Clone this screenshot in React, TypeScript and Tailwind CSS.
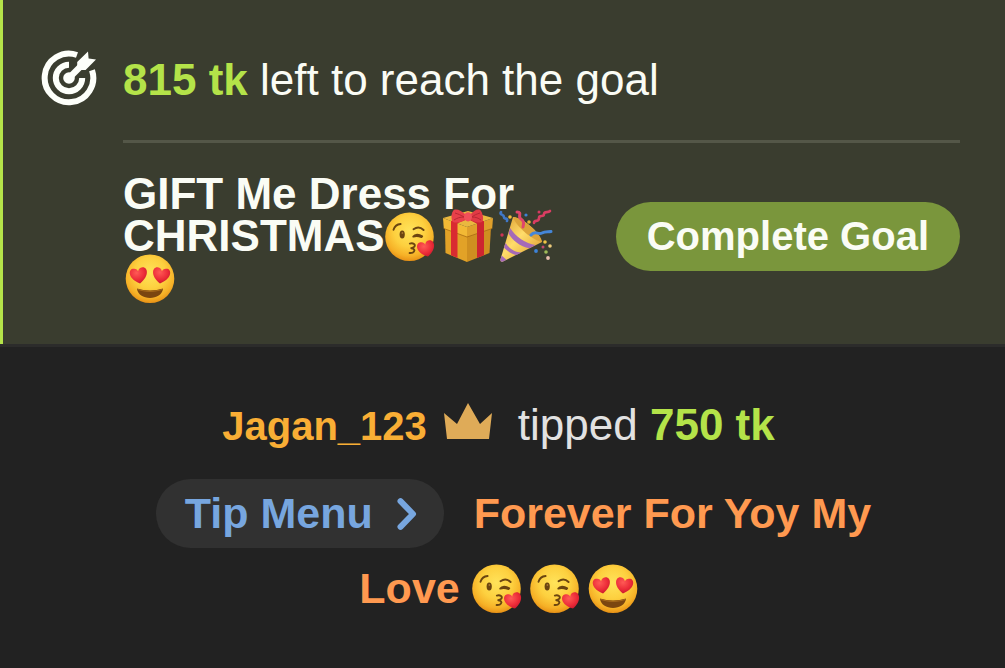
import React from "react";

const HEART =
  "M0 8 C-11 2 -10 -7 -5 -7.5 C-2 -7.8 -.4 -6 0 -4.2 C.4 -6 2 -7.8 5 -7.5 C10 -7 11 2 0 8Z";

const emojiClass = "-mt-[10px] -mb-[11px] inline-block size-[50px] align-baseline";

function Defs() {
  return (
    <svg width="0" height="0" className="absolute" aria-hidden="true">
      <defs>
        <radialGradient id="face" cx=".5" cy=".38" r=".64">
          <stop offset="0" stopColor="#ffe35a" />
          <stop offset=".5" stopColor="#fdd03f" />
          <stop offset=".8" stopColor="#f6b127" />
          <stop offset="1" stopColor="#e58b12" />
        </radialGradient>
        <radialGradient id="heart" cx=".4" cy=".3" r=".75">
          <stop offset="0" stopColor="#ff5a55" />
          <stop offset=".6" stopColor="#ec2c38" />
          <stop offset="1" stopColor="#c5162c" />
        </radialGradient>
        <linearGradient id="cone" x1="0" y1="0" x2="1" y2="1">
          <stop offset="0" stopColor="#d9982c" />
          <stop offset=".45" stopColor="#ffdc6a" />
          <stop offset="1" stopColor="#d69327" />
        </linearGradient>
      </defs>
    </svg>
  );
}

function KissFace({ className = "" }: { className?: string }) {
  return (
    <svg viewBox="0 0 50 50" role="img" aria-label="Face blowing a kiss" className={`${emojiClass} ${className}`}>
      <circle cx="24.5" cy="24.8" r="24.3" fill="url(#face)" />
      <g fill="none" stroke="#6b4510" strokeWidth="1.9" strokeLinecap="round" strokeLinejoin="round">
        <path d="M8.5 17.8C9.6 14.3 12 12.3 15.6 12" />
        <path d="M28.5 17.2C31.8 14.8 35.6 15 38.6 18" />
        <path d="M37.2 24.2C33.6 22 30 22.2 28.3 24.6C31 23.6 33.8 24 36.6 25" />
        <path d="M24.8 31.6C28.3 30.6 31 32.6 29.3 34.7C28.5 35.6 27.3 36 26.2 36.2C28.7 36.4 30.2 37.8 29 39.4C28.1 40.8 26.3 41.2 24.6 41" />
      </g>
      <ellipse cx="17.2" cy="22.6" rx="2.6" ry="4" fill="#6b4510" />
      <circle cx="17.4" cy="21" r=".9" fill="#a8762c" />
      <path d={HEART} fill="url(#heart)" transform="translate(41.2 36.8) rotate(-13)" />
    </svg>
  );
}

function HeartEyes({ className = "" }: { className?: string }) {
  return (
    <svg viewBox="0 0 50 50" role="img" aria-label="Smiling face with heart eyes" className={`${emojiClass} ${className}`}>
      <circle cx="25" cy="24.8" r="24.3" fill="url(#face)" />
      <path d={HEART} fill="url(#heart)" transform="translate(13.8 21.5) rotate(-9)" />
      <path d={HEART} fill="url(#heart)" transform="translate(36.2 21.5) rotate(9)" />
      <path d="M12 34.5C20 37 30 37 38 34.5C37.5 40.5 31.5 44 25 44S12.5 40.5 12 34.5Z" fill="#7b4610" />
      <path d="M13 35.5C21 38 29 38 37 35.5" fill="none" stroke="#a76a1c" strokeWidth="1" />
    </svg>
  );
}

function Gift() {
  return (
    <svg viewBox="0 0 50 54" role="img" aria-label="Wrapped gift" className="-mt-[12px] -mb-[12px] ml-[8px] inline-block h-[54px] w-[50px] align-baseline">
      <path d="M2 18L24 26V53L2.5 44Z" fill="#e2a227" />
      <path d="M24 26L48 18L46.5 44L24 53Z" fill="#cf8f20" />
      <path d="M0 9L24 18V28L.8 19.5Z" fill="#f2b935" />
      <path d="M24 18L50 9L49.2 19.5L24 28Z" fill="#dfa02b" />
      <path d="M0 9L25 2L50 9L24 18Z" fill="#eab83f" />
      <path d="M.8 19.5L24 28L49.2 19.5" fill="none" stroke="#a86c14" strokeWidth=".8" />
      <path d="M8 12L25 6L30 8L14.5 14.3V49L8 46.3Z" fill="#d92b31" />
      <path d="M41 12.2L26 6L21 8L34 14.8V49L41 46.2Z" fill="#cd2530" />
      <path d="M23 6C18 1 12-1 10 2C8 5 8 11 10 13C14 14.5 20 13 23 10Z" fill="#e8404a" />
      <path d="M27 6C31 1 36-1 38 2C40 5 41 11 39 13C35 14.5 30 13 27 10Z" fill="#e13a45" />
      <path d="M12 4C15 5 18 6 21 8C17 8 14 9 11 11" fill="none" stroke="#b82834" strokeWidth="1" />
      <path d="M37 4C34 5 31 6 29 8C33 8 35 9 38 11" fill="none" stroke="#b82834" strokeWidth="1" />
      <ellipse cx="25" cy="7.8" rx="4" ry="4.6" fill="#f0505a" />
    </svg>
  );
}

function Popper() {
  return (
    <svg viewBox="0 0 54 54" role="img" aria-label="Party popper" className="-mt-[12px] -mb-[12px] ml-[6px] inline-block size-[54px] align-baseline">
      <path d="M14 8C24 9 39 22 43 33L4 52.5C2 53.3 1 52 1.6 50Z" fill="url(#cone)" />
      <path d="M11.2 19C16 27 27 35 36.5 36L30.5 39.3C21 37.5 13.5 31.5 9.5 24.5Z" fill="#a56ab8" />
      <path d="M6.6 34C10 39.5 16 43.5 22.5 43.4L17.5 46C12 45 7.5 41.5 5 38.5Z" fill="#a56ab8" />
      <path d="M2.6 46.5L7.5 50.8L4 52.5C2 53.3 1 52 1.6 50Z" fill="#a56ab8" />
      <path d="M14 8C21 7 42 23 43 33C35 32 17 18 14 8Z" fill="#dca33a" />
      <g fill="none" strokeLinecap="round" strokeWidth="3">
        <path d="M18 3C24 3 18 8 22 10C25 12 25 14 24 18" stroke="#e0456b" />
        <path d="M32 26C36 21 39 26 43 24C46 22 49 23 52 22.5" stroke="#4586d8" />
        <path d="M35 14C35 10 40 14 40 9C40 5 45 9 45 5C45 2 49 4 51 2" stroke="#d93d62" strokeWidth="2.6" />
        <path d="M2 3C0 6 5 5 5 8C5 11 9 8 8 12" stroke="#4078c8" strokeWidth="2.6" />
      </g>
      <circle cx="11" cy="8" r="1.8" fill="#f3bd3d" />
      <circle cx="27" cy="6" r="1.6" fill="#3d83d7" />
      <circle cx="30" cy="13" r="1.8" fill="#e5b436" />
      <circle cx="40" cy="3" r="1.5" fill="#d53961" />
      <circle cx="3" cy="26" r="1.7" fill="#cf3454" />
      <circle cx="46" cy="33" r="1.8" fill="#efc443" />
      <circle cx="51" cy="37" r="1.8" fill="#edcb7c" />
      <circle cx="37" cy="42" r="1.9" fill="#3d83d7" />
      <circle cx="44" cy="38" r="1.5" fill="#c4466f" />
      <circle cx="47" cy="43" r="1.8" fill="#9fbb57" />
      <circle cx="49" cy="49" r="1.9" fill="#e9bfb0" />
    </svg>
  );
}

function TargetIcon() {
  return (
    <svg viewBox="0 0 56 56" className="size-14 shrink-0" aria-hidden="true">
      <g fill="none" stroke="#fdfffa">
        <path d="M51 20.2A24.3 24.3 0 1 1 36 5" strokeWidth="6" />
        <path d="M41.2 28A13.2 13.2 0 1 1 28 14.8" strokeWidth="6" />
        <path d="M28 28L40 16" strokeWidth="6.4" />
      </g>
      <circle cx="28" cy="28" r="5.8" fill="#fdfffa" />
      <path d="M36.2 12L47 1.4L47.6 8.6L55 9.6L44.6 20H36.2Z" fill="#fdfffa" />
    </svg>
  );
}

export default function App() {
  return (
    <main className="min-h-screen bg-[#222222] font-['Liberation_Sans',Arial,sans-serif] text-[#fafcf5]">
      <Defs />
      <section className="border-b-[3px] border-[#2c2c2b]">
        <div className="flex gap-[26px] border-l-[3px] border-[#b4e349] bg-[#3a3d2f] pt-[50px] pr-[45px] pb-[45px] pl-[38px]">
          <TargetIcon />
          <div className="min-w-0 flex-1">
            <p className="border-b-[3px] border-[#545748] pb-[30px] text-[44px] leading-[60px]">
              <strong className="text-[#b4e349]">815 tk</strong> left to reach the goal
            </p>
            <div className="flex items-center gap-[30px] pt-[30px]">
              <h1 className="min-w-0 flex-1 text-[44px] leading-[42px] font-bold">
                GIFT Me Dress For CHRISTMAS
                <KissFace />
                <Gift />
                <Popper />
                <HeartEyes className="ml-[2px]" />
              </h1>
              <button
                type="button"
                className="h-[69px] shrink-0 rounded-full bg-[#7a963c] px-[31px] text-[40px] font-bold whitespace-nowrap"
              >
                Complete Goal
              </button>
            </div>
          </div>
        </div>
      </section>

      <section className="pt-10 pr-24 pl-22 text-center text-[43px] leading-[75px]">
        <p className="flex items-baseline justify-center text-[44px]">
          <strong className="text-[40px] text-[#f9ae35]">Jagan_123</strong>
          <svg viewBox="0 0 50 38" className="mr-[25px] ml-4 h-[38px] w-[50px]" role="img" aria-label="Crown">
            <path d="M1 11L14 22L25 1L37 22L49 11L46 37H4Z" fill="#dfab58" />
          </svg>
          <span className="text-[#e2e2e2]">
            tipped <strong className="text-[#b4e349]">750 tk</strong>
          </span>
        </p>
        <p className="mt-3 font-bold text-[#ff9950]">
          <button
            type="button"
            className="mr-[18px] ml-[30px] inline-flex h-[69px] items-center gap-6 rounded-full bg-[#313131] pr-[27px] pl-[29px] align-baseline leading-[69px] text-[#77a6df]"
          >
            Tip Menu
            <svg viewBox="0 0 20 32" className="h-8 w-5" aria-hidden="true">
              <path d="M3.5 3.2L16 16L3.5 28.8" fill="none" stroke="currentColor" strokeWidth="6" strokeLinecap="round" strokeLinejoin="round" />
            </svg>
          </button>{" "}
          Forever For Yoy My Love <KissFace />
          <KissFace className="ml-2" />
          <HeartEyes className="ml-2" />
        </p>
      </section>
    </main>
  );
}
